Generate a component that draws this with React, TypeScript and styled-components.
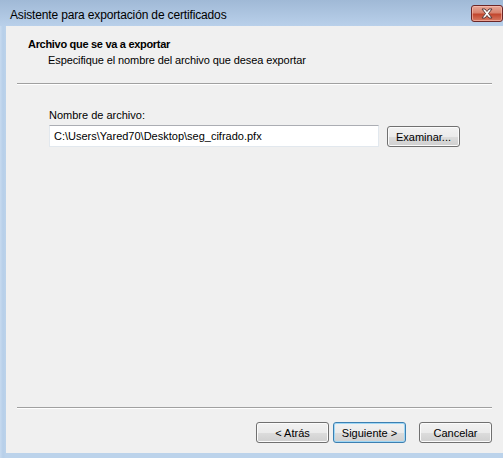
import React from 'react'
import styled, { createGlobalStyle } from 'styled-components'

const GlobalStyle = createGlobalStyle`
  html, body {
    margin: 0;
    padding: 0;
    background: #bcd3eb;
  }
  body {
    font-family: "Liberation Sans", Arial, sans-serif;
    font-size: 11px;
    color: #000;
  }
`

const Frame = styled.div`
  width: 503px;
  height: 458px;
  display: flex;
  flex-direction: column;
  box-sizing: border-box;
  padding: 0 0 5px 6px;
  background: linear-gradient(90deg, #c7daef 0, #b7cfe9 3px, #bcd3eb 6px);
  overflow: hidden;
`

const TitleBar = styled.div`
  height: 26px;
  margin-left: -6px;
  padding-left: 10px;
  display: flex;
  align-items: flex-start;
  background: linear-gradient(#a0b9d6, #b9d0ea);
`

const Title = styled.div`
  flex: 1;
  font-size: 12px;
  letter-spacing: -0.15px;
  line-height: 16px;
  padding-top: 7px;
  white-space: nowrap;
`

const CloseButton = styled.div`
  margin-top: 5px;
  width: 32px;
  height: 17px;
  box-sizing: border-box;
  border: 1px solid #6b2626;
  border-radius: 3px;
  background: linear-gradient(#e7a797 0%, #d8836f 45%, #c2462e 55%, #d77a63 100%);
  box-shadow: inset 0 0 0 1px rgba(255, 200, 190, 0.55);
  display: flex;
  align-items: center;
  justify-content: center;
`

const Content = styled.div`
  flex: 1;
  background: #f0f0f0;
  display: flex;
  flex-direction: column;
`

const Header = styled.div`
  height: 57px;
  box-sizing: border-box;
  padding: 10px 0 0 22px;
  line-height: 16px;
`

const HeaderTitle = styled.div`
  font-weight: bold;
  letter-spacing: -0.3px;
`

const HeaderSubtitle = styled.div`
  padding-left: 20px;
  letter-spacing: -0.1px;
`

const Separator = styled.div`
  margin: 0 11px;
  border-top: 1px solid #a0a0a0;
  border-bottom: 1px solid #ffffff;
`

const Body = styled.div`
  flex: 1;
  padding: 22px 0 0 43px;
  display: flex;
  flex-direction: column;
`

const Label = styled.div`
  line-height: 16px;
  margin-bottom: 2px;
`

const FieldRow = styled.div`
  display: flex;
  align-items: flex-start;
  gap: 8px;
`

const TextBox = styled.div`
  width: 330px;
  height: 22px;
  box-sizing: border-box;
  border: 1px solid #e2e8ee;
  border-top-color: #abadb3;
  background: #fff;
  padding: 0 0 0 4px;
  display: flex;
  align-items: center;
  white-space: nowrap;
`

const Button = styled.div<{ $default?: boolean }>`
  width: 73px;
  height: 21px;
  box-sizing: border-box;
  border: 1px solid ${(p) => (p.$default ? '#3c7fb1' : '#707070')};
  border-radius: 3px;
  background: linear-gradient(#f2f2f2 0%, #ebebeb 50%, #dddddd 50%, #cfcfcf 100%);
  box-shadow: inset 0 0 0 1px ${(p) => (p.$default ? '#9fd7f5' : '#fbfbfb')};
  display: flex;
  align-items: center;
  justify-content: center;
  white-space: nowrap;
`

const BrowseButton = styled(Button)`
  margin-top: 1px;
`

const Footer = styled.div`
  padding: 13px 11px 10px 0;
  display: flex;
  justify-content: flex-end;
  gap: 4px;
`

const CancelButton = styled(Button)`
  margin-left: 9px;
`

const CloseGlyph = () => (
  <svg width="14" height="11" viewBox="0 0 14 11">
    <path
      d="M2 1 L5 1 L7 3.5 L9 1 L12 1 L8.5 5.5 L12 10 L9 10 L7 7.5 L5 10 L2 10 L5.5 5.5 Z"
      fill="#ffffff"
      stroke="#5a3a3a"
      strokeWidth="1"
      strokeLinejoin="round"
    />
  </svg>
)

export default function App() {
  return (
    <>
      <GlobalStyle />
      <Frame>
        <TitleBar>
          <Title>Asistente para exportación de certificados</Title>
          <CloseButton>
            <CloseGlyph />
          </CloseButton>
        </TitleBar>
        <Content>
          <Header>
            <HeaderTitle>Archivo que se va a exportar</HeaderTitle>
            <HeaderSubtitle>Especifique el nombre del archivo que desea exportar</HeaderSubtitle>
          </Header>
          <Separator />
          <Body>
            <Label>Nombre de archivo:</Label>
            <FieldRow>
              <TextBox>C:\Users\Yared70\Desktop\seg_cifrado.pfx</TextBox>
              <BrowseButton>Examinar...</BrowseButton>
            </FieldRow>
          </Body>
          <Separator />
          <Footer>
            <Button>&lt; Atrás</Button>
            <Button $default>Siguiente &gt;</Button>
            <CancelButton>Cancelar</CancelButton>
          </Footer>
        </Content>
      </Frame>
    </>
  )
}
